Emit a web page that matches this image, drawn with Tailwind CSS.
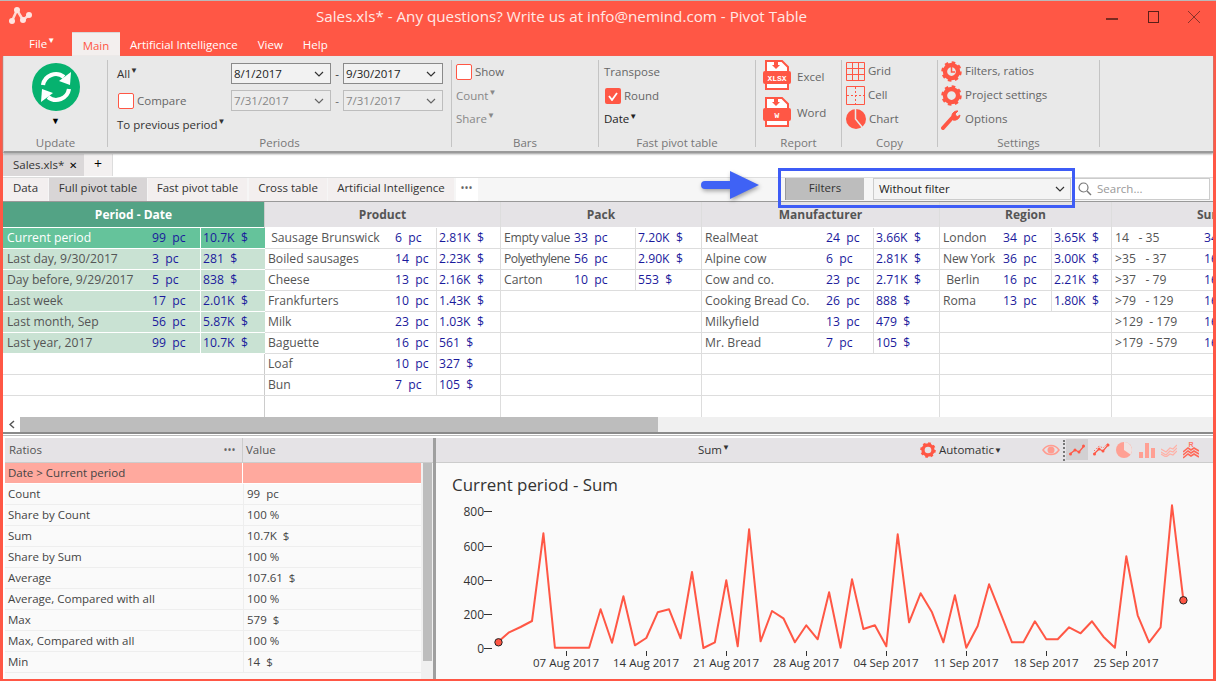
<!doctype html>
<html><head><meta charset="utf-8">
<script src="https://cdn.jsdelivr.net/npm/@tailwindcss/browser@4"></script>
</head>
<body class="m-0">
<svg class="absolute w-0 h-0">
  <symbol id="gear" viewBox="0 0 24 24"><circle cx="12" cy="12" r="7.5" fill="none" stroke="#ff5745" stroke-width="5"/><circle cx="12" cy="12" r="10.2" fill="none" stroke="#ff5745" stroke-width="3" stroke-dasharray="4 4"/></symbol>
</svg>
<div class="relative w-[1216px] h-[681px] overflow-hidden bg-[#ff5745] border-t border-[#b9b9b9] px-[3px] pb-[2px] flex flex-col font-['Open_Sans','Noto_Sans',sans-serif] text-[11.5px] leading-[20px] text-[#555]">
  <!-- title -->
  <div class="h-[30px] -mx-[3px] flex items-center relative shrink-0">
    <svg class="ml-[8px] w-[24px] h-[20px]" viewBox="0 0 24 20"><path d="M4 15 9 4 15 14 21 9" fill="none" stroke="#ffd8d2" stroke-width="2.5"/><circle cx="4" cy="15" r="3" fill="#ffe4e0"/><circle cx="9" cy="4" r="3" fill="#ffe4e0"/><circle cx="15" cy="14" r="3" fill="#ffe4e0"/><circle cx="21" cy="9" r="3" fill="#ffe4e0"/></svg>
    <div class="absolute left-[316px] top-[4px] text-[15.2px] leading-[22px] text-[#ffe9e5] whitespace-nowrap">Sales.xls* - Any questions? Write us at info@nemind.com - Pivot Table</div>
    <div class="ml-auto flex items-center mr-[15px]">
      <div class="w-[12px] h-[2px] bg-[#7a2a20] mt-[6px]"></div>
      <div class="w-[11px] h-[12px] border border-[#5a1f18] mt-[2px] ml-[30px]"></div>
      <svg class="w-[14px] h-[14px] mt-[2px] ml-[28px]" viewBox="0 0 14 14"><path d="M1 1 13 13M13 1 1 13" stroke="#8a3329" stroke-width="1" fill="none"/></svg>
    </div>
  </div>
  <!-- menu -->
  <div class="h-[25px] flex items-end shrink-0 text-white">
    <div class="w-[69px] h-[25px] pl-[26px] pt-[3px] flex"><span class="text-[#fff]">File</span><span class="text-[8px] leading-[12px]">▼</span></div>
    <div class="w-[48px] h-[24px] bg-[#f3efee] text-[#ff5745] text-center border-t border-[#d8d8d8] pt-[3px]">Main</div>
    <div class="ml-[10px] h-[24px] pt-[3px]">Artificial Intelligence</div>
    <div class="ml-[20px] h-[24px] pt-[3px]">View</div>
    <div class="ml-[20px] h-[24px] pt-[3px]">Help</div>
  </div>
  <!-- ribbon -->
  <div class="h-[97px] shrink-0 bg-[#e9e9e9] flex border-b-2 border-[#9a9a9a] shadow-[0_1px_2px_#999] relative z-10 border-l border-l-[#d5d5d5]">
    <div class="w-[104px] h-[87px] mt-[4px] border-r border-[#c4c4c4] flex flex-col items-center">
      <svg class="w-[48px] h-[48px] mt-[3px]" viewBox="-24 -24 48 48"><circle r="24" fill="#06b26f"/><g fill="none" stroke="#fff" stroke-width="4.2"><path d="M-13-2A13 13 0 0 1 8-10"/><path d="M13 2A13 13 0 0 1-8 10"/></g><path d="M15-15 14-2 3-6Z" fill="#fff"/><path d="M-15 15-14 2-3 6Z" fill="#fff"/></svg>
      <div class="text-[9px] leading-[14px] mt-[3px] text-black">▼</div>
      <div class="mt-auto h-[20px] -mb-[6px] text-[#777]">Update</div>
    </div>
    <div class="w-[344px] h-[87px] mt-[4px] border-r border-[#c4c4c4] flex flex-col pl-[9px]">
      <div class="flex items-center h-[21px] mt-[3px] text-[#333]">
        <div class="w-[114px] flex"><span>All</span><span class="text-[8px] leading-[12px]">▼</span></div>
        <div class="w-[100px] h-[21px] border border-[#8a8a8a] bg-[#f2f2f2] flex items-center justify-between px-[2px] text-[#222]">8/1/2017<svg class="w-[10px] h-[6px] mr-[4px]" viewBox="0 0 10 6"><path d="M1 1 5 5 9 1" fill="none" stroke="#333" stroke-width="1.2"/></svg></div>
        <div class="w-[12px] text-center">-</div>
        <div class="w-[100px] h-[21px] border border-[#8a8a8a] bg-[#f2f2f2] flex items-center justify-between px-[2px] text-[#222]">9/30/2017<svg class="w-[10px] h-[6px] mr-[4px]" viewBox="0 0 10 6"><path d="M1 1 5 5 9 1" fill="none" stroke="#333" stroke-width="1.2"/></svg></div>
      </div>
      <div class="flex items-center h-[21px] mt-[6px] text-[#666]">
        <div class="w-[114px] flex items-center"><span class="w-[16px] h-[16px] ml-[1px] mr-[3px] bg-white border border-[#ff5745] rounded-[2px]"></span>Compare</div>
        <div class="w-[100px] h-[21px] border border-[#bdbdbd] bg-[#ececec] flex items-center justify-between px-[2px] text-[#888]">7/31/2017<svg class="w-[10px] h-[6px] mr-[4px]" viewBox="0 0 10 6"><path d="M1 1 5 5 9 1" fill="none" stroke="#666" stroke-width="1.2"/></svg></div>
        <div class="w-[12px] text-center">-</div>
        <div class="w-[100px] h-[21px] border border-[#bdbdbd] bg-[#ececec] flex items-center justify-between px-[2px] text-[#888]">7/31/2017<svg class="w-[10px] h-[6px] mr-[4px]" viewBox="0 0 10 6"><path d="M1 1 5 5 9 1" fill="none" stroke="#666" stroke-width="1.2"/></svg></div>
      </div>
      <div class="flex h-[20px] mt-[4px] text-[#333]"><span>To previous period</span><span class="text-[8px] leading-[12px]">▼</span></div>
      <div class="-mt-[2px] h-[20px] -mb-[6px] text-center text-[#777] pr-[9px]">Periods</div>
    </div>
    <div class="w-[147px] h-[87px] mt-[4px] border-r border-[#c4c4c4] pl-[4px] flex flex-col">
      <div class="flex items-center h-[20px] mt-[2px] text-[#666]"><span class="w-[16px] h-[16px] mr-[3px] bg-white border border-[#ff5745] rounded-[2px]"></span>Show</div>
      <div class="flex h-[20px] mt-[4px] text-[#888]"><span>Count</span><span class="text-[8px] leading-[12px]">▼</span></div>
      <div class="flex h-[20px] mt-[3px] text-[#888]"><span>Share</span><span class="text-[8px] leading-[12px]">▼</span></div>
      <div class="mt-auto h-[20px] -mb-[6px] text-center text-[#777] pr-[4px]">Bars</div>
    </div>
    <div class="w-[157px] h-[87px] mt-[4px] border-r border-[#c4c4c4] pl-[5px] flex flex-col text-[#666]">
      <div class="h-[20px] mt-[2px]">Transpose</div>
      <div class="flex items-center h-[20px] mt-[4px]"><span class="w-[16px] h-[16px] ml-[1px] mr-[3px] bg-[#ff5745] rounded-[2px] flex items-center justify-center"><svg class="w-[10px] h-[9px]" viewBox="0 0 10 9"><path d="M1 4 4 8 9 1" fill="none" stroke="#fff" stroke-width="1.8"/></svg></span>Round</div>
      <div class="flex h-[20px] mt-[3px] text-[#222]"><span>Date</span><span class="text-[8px] leading-[14px]">▼</span></div>
      <div class="mt-auto h-[20px] -mb-[6px] text-center text-[#777] pr-[5px]">Fast pivot table</div>
    </div>
    <div class="w-[86px] h-[87px] mt-[4px] border-r border-[#c4c4c4] pl-[7px] flex flex-col text-[#666]">
      <div class="flex items-center h-[30px]"><svg class="w-[28px] h-[30px] mr-[6px]" viewBox="0 0 28 30"><path d="M3 1H19L25 7V29H3Z" fill="#fff" stroke="#ff5745" stroke-width="2"/><path d="M11 1V5H9L13 9 17 5H15V1Z" fill="#ff5745"/><rect x="0" y="11" width="28" height="13" rx="2" fill="#ff5745"/><text x="14" y="21" text-anchor="middle" font-size="8" font-weight="700" fill="#fff" font-family="Liberation Mono">XLSX</text></svg><span class="mt-[3px]">Excel</span></div>
      <div class="flex items-center h-[30px] mt-[7px]"><svg class="w-[28px] h-[30px] mr-[6px]" viewBox="0 0 28 30"><path d="M3 1H19L25 7V29H3Z" fill="#fff" stroke="#ff5745" stroke-width="2"/><path d="M11 1V5H9L13 9 17 5H15V1Z" fill="#ff5745"/><rect x="0" y="11" width="28" height="13" rx="2" fill="#ff5745"/><text x="14" y="21" text-anchor="middle" font-size="8" font-weight="700" fill="#fff" font-family="Liberation Mono">W</text></svg><span class="mt-[1px]">Word</span></div>
      <div class="mt-auto h-[20px] -mb-[6px] text-center text-[#777] pr-[7px]">Report</div>
    </div>
    <div class="w-[96px] h-[87px] mt-[4px] border-r border-[#c4c4c4] pl-[4px] flex flex-col text-[#666]">
      <div class="flex items-center h-[20px] mt-[1px]"><svg class="w-[19px] h-[19px] mr-[3px]" viewBox="0 0 19 19"><path d="M.5.5H18.5V18.5H.5ZM6.5.5V18.5M12.5.5V18.5M.5 6.5H18.5M.5 12.5H18.5" fill="none" stroke="#ff5745"/></svg>Grid</div>
      <div class="flex items-center h-[20px] mt-[4px]"><svg class="w-[19px] h-[19px] mr-[3px]" viewBox="0 0 19 19"><path d="M.5.5H18.5V18.5H.5Z" fill="none" stroke="#ff5745"/><path d="M9.5 1V18M1 9.5H18" stroke="#ff5745" stroke-dasharray="2 2"/></svg>Cell</div>
      <div class="flex items-center h-[22px] mt-[3px]"><svg class="w-[20px] h-[20px] mr-[3px]" viewBox="0 0 20 20"><circle cx="10" cy="10" r="10" fill="#ff5745"/><path d="M9.5 0V10L16 18" fill="none" stroke="#e9e9e9" stroke-width="1.5"/></svg>Chart</div>
      <div class="mt-auto h-[20px] -mb-[6px] text-center text-[#777] pr-[4px]">Copy</div>
    </div>
    <div class="w-[162px] h-[87px] mt-[4px] border-r border-[#c4c4c4] pl-[3px] flex flex-col text-[#666]">
      <div class="flex items-center h-[22px]"><span class="relative w-[21px] h-[21px] mr-[3px]"><svg class="w-[21px] h-[21px]"><use href="#gear"/></svg><svg class="absolute inset-0 w-[21px] h-[21px]" viewBox="0 0 21 21"><path d="M10.5 6V11H14" fill="none" stroke="#ff5745" stroke-width="1.5"/></svg></span>Filters, ratios</div>
      <div class="flex items-center h-[22px] mt-[2px]"><svg class="w-[21px] h-[21px] mr-[3px]"><use href="#gear"/></svg>Project settings</div>
      <div class="flex items-center h-[22px] mt-[2px]"><svg class="w-[21px] h-[21px] mr-[3px]" viewBox="0 0 21 21"><path d="M2 19 11 9" stroke="#ff5745" stroke-width="4" stroke-linecap="round"/><path d="M11 9A5.5 5.5 0 0 1 17 2L14 5 16 8 19 6A5.5 5.5 0 0 1 12 11Z" fill="#ff5745" stroke="#ff5745"/></svg>Options</div>
      <div class="mt-auto h-[20px] -mb-[6px] text-center text-[#777] pr-[3px]">Settings</div>
    </div>
    <div class="flex-1"></div>
  </div>
  <!-- body -->
  <div class="flex-1 min-h-0 bg-white flex flex-col">
    <div class="h-[24px] flex shrink-0 pt-[1px] bg-white">
      <div class="w-[81px] h-[22px] bg-[#dbd8d9] pl-[10px] flex items-center text-[#333]">Sales.xls*<span class="ml-[5px] text-[10px] text-black">✕</span></div>
      <div class="w-[29px] h-[22px] bg-[#f3f0f0] border-r border-[#ddd] text-center text-black text-[14px]">+</div>
    </div>
    <div class="h-[25px] shrink-0 flex items-stretch bg-[#f6f6f6] border-t border-[#ddd] border-b border-b-[#999] text-[#333]">
      <div class="w-[45px] text-center bg-[#f3efef] mr-[1px]">Data</div>
      <div class="w-[98px] text-center bg-[#d8d5d6] mr-[1px]">Full pivot table</div>
      <div class="w-[99px] text-center bg-[#f3efef] mr-[2px]">Fast pivot table</div>
      <div class="w-[78px] text-center bg-[#f3efef] mr-[1px]">Cross table</div>
      <div class="w-[126px] text-center bg-[#f3efef] mr-[2px]">Artificial Intelligence</div>
      <div class="w-[22px] text-center bg-white font-bold text-[8px] tracking-[1px] text-[#666]">•••</div>
      <div class="ml-[307px] w-[79px] h-[22px] bg-[#bdbdbd] border-l border-[#999] text-center">Filters</div>
      <div class="ml-[9px] w-[198px] h-[22px] bg-[#f4f4f4] border border-[#ccc] pl-[5px] flex items-center justify-between text-[#222]">Without filter<svg class="w-[10px] h-[6px] mr-[5px]" viewBox="0 0 10 6"><path d="M1 1 5 5 9 1" fill="none" stroke="#333" stroke-width="1.2"/></svg></div>
      <div class="ml-[3px] w-[136px] h-[22px] bg-white border border-[#ccc] flex items-center pl-[3px] text-[#999]"><svg class="w-[14px] h-[14px] mr-[5px]" viewBox="0 0 14 14"><circle cx="5.5" cy="5.5" r="4.5" fill="none" stroke="#777" stroke-width="1.2"/><path d="M9 9 13 13" stroke="#777" stroke-width="1.5"/></svg>Search...</div>
    </div>
    <!-- pivot grid -->
    <div class="h-[215px] shrink-0 flex overflow-hidden text-[12.2px] [&>div>div>div]:whitespace-pre">
      <div class="w-[262px] shrink-0 border-r border-[#ccc]">
        <div class="h-[25px] mb-px bg-[#53a385] text-white font-bold text-[12px] text-center leading-[25px]">Period - Date</div>
        <div class="grid grid-cols-[147px_51px_64px] auto-rows-[21px]">
          <div class="bg-[#65c39b] text-white pl-[4px] border-b border-white">Current period</div><div class="bg-[#65c39b] text-[#1a1a9c] pl-[2px] border-b border-r border-white">99  pc</div><div class="bg-[#65c39b] text-[#1a1a9c] pl-[2px] border-b border-white">10.7K  $</div>
          <div class="bg-[#c9e2d3] pl-[4px] border-b border-white">Last day, 9/30/2017</div><div class="bg-[#c9e2d3] text-[#1a1a9c] pl-[2px] border-b border-r border-white">3  pc</div><div class="bg-[#c9e2d3] text-[#1a1a9c] pl-[2px] border-b border-white">281  $</div>
          <div class="bg-[#c9e2d3] pl-[4px] border-b border-white">Day before, 9/29/2017</div><div class="bg-[#c9e2d3] text-[#1a1a9c] pl-[2px] border-b border-r border-white">5  pc</div><div class="bg-[#c9e2d3] text-[#1a1a9c] pl-[2px] border-b border-white">838  $</div>
          <div class="bg-[#c9e2d3] pl-[4px] border-b border-white">Last week</div><div class="bg-[#c9e2d3] text-[#1a1a9c] pl-[2px] border-b border-r border-white">17  pc</div><div class="bg-[#c9e2d3] text-[#1a1a9c] pl-[2px] border-b border-white">2.01K  $</div>
          <div class="bg-[#c9e2d3] pl-[4px] border-b border-white">Last month, Sep</div><div class="bg-[#c9e2d3] text-[#1a1a9c] pl-[2px] border-b border-r border-white">56  pc</div><div class="bg-[#c9e2d3] text-[#1a1a9c] pl-[2px] border-b border-white">5.87K  $</div>
          <div class="bg-[#c9e2d3] pl-[4px] border-b border-white">Last year, 2017</div><div class="bg-[#c9e2d3] text-[#1a1a9c] pl-[2px] border-b border-r border-white">99  pc</div><div class="bg-[#c9e2d3] text-[#1a1a9c] pl-[2px] border-b border-white">10.7K  $</div>
          <div class="col-span-3 border-b border-[#ddd]"></div><div class="col-span-3 border-b border-[#ddd]"></div><div class="col-span-3"></div>
        </div>
      </div>
      <div class="w-[236px] shrink-0 border-r border-[#ddd]">
        <div class="h-[25px] mb-px bg-[#e5e3e6] font-bold text-[12px] text-center leading-[25px]">Product</div>
        <div class="grid grid-cols-[127px_45px_64px] auto-rows-[21px] [&>div]:border-b [&>div]:border-[#ddd]">
          <div class="pl-[3px]"> Sausage Brunswick</div><div class="text-[#1a1a9c] pl-[3px] border-r">6  pc</div><div class="text-[#1a1a9c] pl-[2px]">2.81K  $</div>
          <div class="pl-[3px]">Boiled sausages</div><div class="text-[#1a1a9c] pl-[3px] border-r">14  pc</div><div class="text-[#1a1a9c] pl-[2px]">2.23K  $</div>
          <div class="pl-[3px]">Cheese</div><div class="text-[#1a1a9c] pl-[3px] border-r">13  pc</div><div class="text-[#1a1a9c] pl-[2px]">2.16K  $</div>
          <div class="pl-[3px]">Frankfurters</div><div class="text-[#1a1a9c] pl-[3px] border-r">10  pc</div><div class="text-[#1a1a9c] pl-[2px]">1.43K  $</div>
          <div class="pl-[3px]">Milk</div><div class="text-[#1a1a9c] pl-[3px] border-r">23  pc</div><div class="text-[#1a1a9c] pl-[2px]">1.03K  $</div>
          <div class="pl-[3px]">Baguette</div><div class="text-[#1a1a9c] pl-[3px] border-r">16  pc</div><div class="text-[#1a1a9c] pl-[2px]">561  $</div>
          <div class="pl-[3px]">Loaf</div><div class="text-[#1a1a9c] pl-[3px] border-r">10  pc</div><div class="text-[#1a1a9c] pl-[2px]">327  $</div>
          <div class="pl-[3px]">Bun</div><div class="text-[#1a1a9c] pl-[3px] border-r">7  pc</div><div class="text-[#1a1a9c] pl-[2px]">105  $</div>
          <div class="col-span-3 !border-b-0"></div>
        </div>
      </div>
      <div class="w-[201px] shrink-0 border-r border-[#ddd]">
        <div class="h-[25px] mb-px bg-[#e5e3e6] font-bold text-[12px] text-center leading-[25px]">Pack</div>
        <div class="grid grid-cols-[71px_64px_66px] auto-rows-[21px] [&>div]:border-b [&>div]:border-[#ddd]">
          <div class="pl-[3px] tracking-[-0.3px]">Empty value</div><div class="text-[#1a1a9c] pl-[2px] border-r">33  pc</div><div class="text-[#1a1a9c] pl-[2px]">7.20K  $</div>
          <div class="pl-[3px] tracking-[-0.6px]">Polyethylene</div><div class="text-[#1a1a9c] pl-[2px] border-r">56  pc</div><div class="text-[#1a1a9c] pl-[2px]">2.90K  $</div>
          <div class="pl-[3px]">Carton</div><div class="text-[#1a1a9c] pl-[2px] border-r">10  pc</div><div class="text-[#1a1a9c] pl-[2px]">553  $</div>
          <div class="col-span-3"></div><div class="col-span-3"></div><div class="col-span-3"></div><div class="col-span-3"></div><div class="col-span-3"></div><div class="col-span-3 !border-b-0"></div>
        </div>
      </div>
      <div class="w-[238px] shrink-0 border-r border-[#ddd]">
        <div class="h-[25px] mb-px bg-[#e5e3e6] font-bold text-[12px] text-center leading-[25px]">Manufacturer</div>
        <div class="grid grid-cols-[122px_50px_66px] auto-rows-[21px] [&>div]:border-b [&>div]:border-[#ddd]">
          <div class="pl-[3px]">RealMeat</div><div class="text-[#1a1a9c] pl-[2px] border-r">24  pc</div><div class="text-[#1a1a9c] pl-[2px]">3.66K  $</div>
          <div class="pl-[3px]">Alpine cow</div><div class="text-[#1a1a9c] pl-[2px] border-r">6  pc</div><div class="text-[#1a1a9c] pl-[2px]">2.81K  $</div>
          <div class="pl-[3px]">Cow and co.</div><div class="text-[#1a1a9c] pl-[2px] border-r">23  pc</div><div class="text-[#1a1a9c] pl-[2px]">2.71K  $</div>
          <div class="pl-[3px]">Cooking Bread Co.</div><div class="text-[#1a1a9c] pl-[2px] border-r">26  pc</div><div class="text-[#1a1a9c] pl-[2px]">888  $</div>
          <div class="pl-[3px]">Milkyfield</div><div class="text-[#1a1a9c] pl-[2px] border-r">13  pc</div><div class="text-[#1a1a9c] pl-[2px]">479  $</div>
          <div class="pl-[3px]">Mr. Bread</div><div class="text-[#1a1a9c] pl-[2px] border-r">7  pc</div><div class="text-[#1a1a9c] pl-[2px]">105  $</div>
          <div class="col-span-3"></div><div class="col-span-3"></div><div class="col-span-3 !border-b-0"></div>
        </div>
      </div>
      <div class="w-[172px] shrink-0 border-r border-[#ddd]">
        <div class="h-[25px] mb-px bg-[#e5e3e6] font-bold text-[12px] text-center leading-[25px]">Region</div>
        <div class="grid grid-cols-[61px_51px_60px] auto-rows-[21px] [&>div]:border-b [&>div]:border-[#ddd]">
          <div class="pl-[3px]">London</div><div class="text-[#1a1a9c] pl-[2px] border-r">34  pc</div><div class="text-[#1a1a9c] pl-[2px]">3.65K  $</div>
          <div class="pl-[3px] tracking-[-0.3px]">New York</div><div class="text-[#1a1a9c] pl-[2px] border-r">36  pc</div><div class="text-[#1a1a9c] pl-[2px]">3.00K  $</div>
          <div class="pl-[3px]"> Berlin</div><div class="text-[#1a1a9c] pl-[2px] border-r">16  pc</div><div class="text-[#1a1a9c] pl-[2px]">2.21K  $</div>
          <div class="pl-[3px]">Roma</div><div class="text-[#1a1a9c] pl-[2px] border-r">13  pc</div><div class="text-[#1a1a9c] pl-[2px]">1.80K  $</div>
          <div class="col-span-3"></div><div class="col-span-3"></div><div class="col-span-3"></div><div class="col-span-3"></div><div class="col-span-3 !border-b-0"></div>
        </div>
      </div>
      <div class="flex-1 min-w-0 overflow-hidden">
        <div class="h-[25px] mb-px bg-[#e5e3e6] font-bold text-[12px] leading-[25px] pl-[85px]">Sum</div>
        <div class="grid grid-cols-[90px_60px] auto-rows-[21px] [&>div]:border-b [&>div]:border-[#ddd]">
          <div class="pl-[3px]">14   - 35</div><div class="text-[#1a1a9c] pl-[2px]">34  pc</div>
          <div class="pl-[3px]">&gt;35   - 37</div><div class="text-[#1a1a9c] pl-[2px]">16  pc</div>
          <div class="pl-[3px]">&gt;37   - 79</div><div class="text-[#1a1a9c] pl-[2px]">16  pc</div>
          <div class="pl-[3px]">&gt;79   - 129</div><div class="text-[#1a1a9c] pl-[2px]">16  pc</div>
          <div class="pl-[3px]">&gt;129  - 179</div><div class="text-[#1a1a9c] pl-[2px]">16  pc</div>
          <div class="pl-[3px]">&gt;179  - 579</div><div class="text-[#1a1a9c] pl-[2px]">16  pc</div>
          <div class="col-span-2"></div><div class="col-span-2"></div><div class="col-span-2 !border-b-0"></div>
        </div>
      </div>
    </div>
    <!-- h scrollbar -->
    <div class="h-[17px] shrink-0 flex bg-[#f0f0f0] border-b-2 border-[#8a8a8a]">
      <div class="w-[17px] bg-white flex items-center justify-center"><svg class="w-[6px] h-[9px]" viewBox="0 0 6 9"><path d="M5 1 1 4.5 5 8" fill="none" stroke="#555" stroke-width="1.5"/></svg></div>
      <div class="w-[638px] bg-[#bdbdbd]"></div>
    </div>
    <!-- bottom panes -->
    <div class="flex-1 min-h-0 flex border-t border-[#bbb] mt-px pt-[2px]">
      <div class="w-[433px] shrink-0 pl-[2px] border-r-3 border-[#9f9f9f] flex flex-col overflow-hidden">
        <div class="h-[25px] shrink-0 flex bg-[#e5e3e6] border-b border-[#ccc] leading-[24px]">
          <div class="w-[238px] pl-[4px] border-r border-[#ccc] flex justify-between pr-[6px]">Ratios<span class="font-bold text-[8px] tracking-[1px] text-[#666]">•••</span></div>
          <div class="pl-[3px]">Value</div>
        </div>
        <div class="flex-1 flex min-h-0">
          <div class="w-[416px] shrink-0 grid grid-cols-[238px_178px] auto-rows-[21px] text-[#444] bg-[#fafafa] [&>div]:border-b [&>div]:border-[#eee] [&>div]:pl-[3px] [&>div]:whitespace-pre">
            <div class="bg-[#ffa99e] !border-white border-r">Date &gt; Current period</div><div class="bg-[#ffa99e] !border-white"></div>
            <div>Count</div><div class="border-l">99  pc</div>
            <div>Share by Count</div><div class="border-l">100 %</div>
            <div>Sum</div><div class="border-l">10.7K  $</div>
            <div>Share by Sum</div><div class="border-l">100 %</div>
            <div>Average</div><div class="border-l">107.61  $</div>
            <div>Average, Compared with all</div><div class="border-l">100 %</div>
            <div>Max</div><div class="border-l">579  $</div>
            <div>Max, Compared with all</div><div class="border-l">100 %</div>
            <div>Min</div><div class="border-l">14  $</div>
          </div>
          <div class="flex-1 bg-[#f0f0f0]"><div class="ml-[2px] w-[9px] h-[198px] bg-[#bdbdbd]"></div></div>
        </div>
      </div>
      <div class="flex-1 min-w-0 flex flex-col">
        <div class="h-[25px] shrink-0 bg-[#e5e3e6] border-b border-[#ccc] flex items-center relative text-[#333]">
          <div class="absolute left-[262px] flex"><span>Sum</span><span class="text-[8px] leading-[14px]">▼</span></div>
          <div class="absolute left-[484px] flex items-center"><svg class="w-[16px] h-[16px] mr-[3px]"><use href="#gear"/></svg><span>Automatic</span><span class="text-[8px] leading-[14px]">▼</span></div>
          <svg class="absolute left-[606px] top-[5px] w-[18px] h-[14px]" viewBox="0 0 18 14"><path d="M1 7C5 1 13 1 17 7 13 13 5 13 1 7Z" fill="none" stroke="#ff9c90" stroke-width="1.5"/><circle cx="9" cy="7" r="3.5" fill="#ff9c90"/></svg>
          <div class="absolute left-[627px] top-[2px] h-[21px] border-l-2 border-dotted border-[#777]"></div>
          <div class="absolute left-[630px] top-[1px] w-[22px] h-[21px] bg-[#d2d0d2] flex items-center justify-center"><svg class="w-[16px] h-[12px]" viewBox="0 0 16 12"><path d="M1 10 6 6 10 8 15 2" fill="none" stroke="#ff5745" stroke-width="1.2"/><circle cx="1.5" cy="10" r="1.5" fill="#ff5745"/><circle cx="6" cy="6" r="1.5" fill="#ff5745"/><circle cx="10" cy="8" r="1.5" fill="#ff5745"/><circle cx="14.5" cy="2" r="1.5" fill="#ff5745"/></svg></div>
          <svg class="absolute left-[657px] top-[4px] w-[17px] h-[15px]" viewBox="0 0 17 15"><path d="M1 12 6 7 10 9 15 3" fill="none" stroke="#ff5745" stroke-width="1.2"/><path d="M1 9 6 4 10 6 15 1" fill="none" stroke="#ff5745" stroke-width=".8" stroke-dasharray="1.5 1.5"/><circle cx="1.5" cy="12" r="1.5" fill="#ff5745"/><circle cx="6" cy="7" r="1.5" fill="#ff5745"/><circle cx="10" cy="9" r="1.5" fill="#ff5745"/><circle cx="15" cy="3" r="1.5" fill="#ff5745"/></svg>
          <svg class="absolute left-[680px] top-[4px] w-[16px] h-[16px]" viewBox="0 0 16 16"><circle cx="8" cy="8" r="8" fill="#ffa094"/><path d="M8 8V0A8 8 0 0 1 14.5 12.5Z" fill="#f0e3e2"/></svg>
          <svg class="absolute left-[703px] top-[4px] w-[16px] h-[16px]" viewBox="0 0 16 16"><path d="M0 10H4V16H0ZM6 1H10V16H6ZM12 6H16V16H12Z" fill="#ffa094"/></svg>
          <svg class="absolute left-[725px] top-[5px] w-[16px] h-[14px]" viewBox="0 0 16 14"><g fill="none" stroke="#ffb0a6" stroke-width="1.2"><path d="M0 6 5 9 9 5 12 6 16 2"/><path d="M0 9 5 12 9 8 12 9 16 5"/><path d="M0 11 5 14 9 11 12 12 16 8"/></g></svg>
          <svg class="absolute left-[747px] top-[2px] w-[16px] h-[19px]" viewBox="0 0 16 19"><text x="8" y="7" text-anchor="middle" font-size="7" font-weight="700" fill="#ff7868" font-family="Liberation Sans">R</text><g fill="none" stroke="#ff6a59" stroke-width="1.6"><path d="M0 12 5 8 8 10 11 8 16 11"/><path d="M0 15 5 11 8 13 11 11 16 14"/><path d="M0 18 5 14 8 16 11 14 16 17"/></g></svg>
        </div>
        <div class="flex-1 min-h-0 bg-[#fafafa] relative">
          <svg class="absolute inset-0 w-[777px] h-[217px]" viewBox="436 462 777 217" font-family="Open Sans, Noto Sans, sans-serif" font-size="11.5" fill="#333">
            <text x="452" y="490" font-size="16.9" fill="#333">Current period - Sum</text>
            <g text-anchor="end" font-size="12"><text x="484" y="515">800</text><text x="484" y="550">600</text><text x="484" y="584">400</text><text x="484" y="618">200</text><text x="484" y="652">0</text></g>
            <path d="M484 510.5H492M484 545.5H492M484 579.5H492M484 613.5H492M484 647.5H492M566.5 650V655M646.5 650V655M726.5 650V655M806.5 650V655M886.5 650V655M966.5 650V655M1046.5 650V655M1126.5 650V655" stroke="#333" fill="none"/>
            <g text-anchor="middle"><text x="566" y="666">07 Aug 2017</text><text x="646" y="666">14 Aug 2017</text><text x="726" y="666">21 Aug 2017</text><text x="806" y="666">28 Aug 2017</text><text x="886" y="666">04 Sep 2017</text><text x="966" y="666">11 Sep 2017</text><text x="1046" y="666">18 Sep 2017</text><text x="1126" y="666">25 Sep 2017</text></g>
            <polyline fill="none" stroke="#ff5745" stroke-width="2" stroke-linejoin="round" points="497.7,641.3 509.1,631.3 520.6,626 532,620 543.4,532.3 554.9,646.7 566.3,646.7 577.7,646.7 589.1,646.7 600.6,608.3 612,641.7 623.4,595.3 634.9,644.3 646.3,637 657.7,611.3 669.1,608.3 680.6,637.3 692,571 703.4,647 714.9,641.3 726.3,579.3 737.7,645.3 749.1,528.3 760.6,640.3 772,610 783.4,617.3 794.9,641.3 806.3,624.3 817.7,638.3 829.1,591.3 840.6,646.7 852,578.3 863.4,628 874.9,624.3 886.3,645.3 897.7,533.3 909.1,621.3 920.6,592.3 932,611.3 943.4,641.3 954.9,594.3 966.3,646.7 977.7,625 989.1,583.3 1000.6,612.3 1012,641.3 1023.4,641.3 1034.9,620.3 1046.3,638.3 1057.7,638.3 1069.1,626.3 1080.6,632.3 1092,620.3 1103.4,635.7 1114.9,646.7 1126.3,555.3 1137.7,614.3 1149.1,641.3 1160.6,626.3 1172,504.3 1183.4,599.3"/>
            <circle cx="498.5" cy="641.3" r="3.7" fill="#ff5745" stroke="#222" stroke-width="1"/>
            <circle cx="1183.4" cy="599.3" r="3.7" fill="#ff5745" stroke="#222" stroke-width="1"/>
          </svg>
        </div>
      </div>
    </div>
  </div>
  <!-- annotation overlay -->
  <svg class="absolute left-[700px] top-[169px] w-[62px] h-[32px] drop-shadow-[1px_2px_2px_rgba(0,0,0,.35)]" viewBox="0 0 62 32"><path d="M5 11H30V1L59 15 30 29V19H5A4 4 0 0 1 5 11Z" fill="#3f62f5"/></svg>
  <div class="absolute left-[778px] top-[167px] w-[297px] h-[40px] border-[3px] border-[#3e5cf6]"></div>
</div>
</body></html>
